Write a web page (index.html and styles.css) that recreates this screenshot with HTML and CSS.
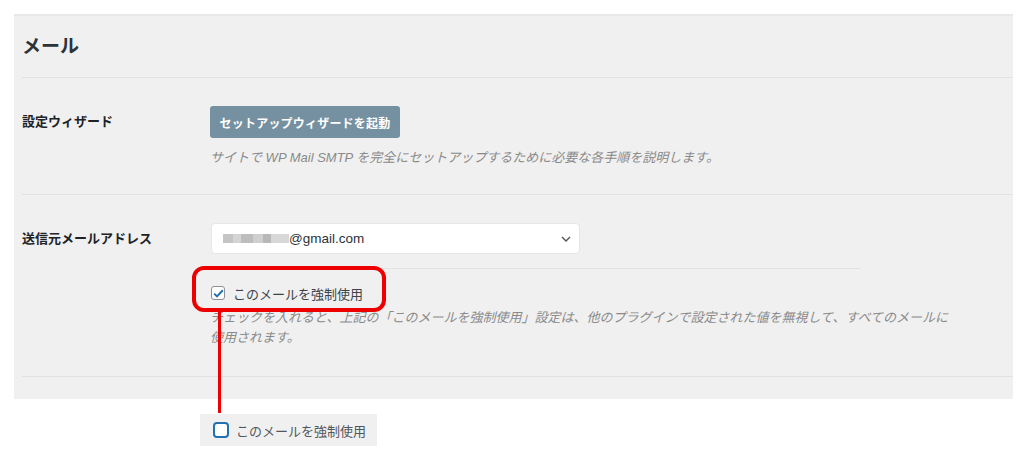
FILE: index.html
```html
<!DOCTYPE html>
<html lang="ja">
<head>
<meta charset="utf-8">
<title>メール設定</title>
<link rel="stylesheet" href="styles.css">
</head>
<body>
<div class="panel">
  <h2 class="heading">メール</h2>
  <div class="row row-wizard">
    <div class="label">設定ウィザード</div>
    <div class="field">
      <button class="btn">セットアップウィザードを起動</button>
      <p class="desc">サイトで WP Mail SMTP を完全にセットアップするために必要な各手順を説明します。</p>
    </div>
  </div>
  <div class="row row-from">
    <div class="label label-select">送信元メールアドレス</div>
    <div class="field">
      <div class="select">
        <span class="blur"></span><span class="email">@gmail.com</span>
        <svg class="chev" width="10" height="6" viewBox="0 0 10 6"><path d="M1 1 L5 5 L9 1" fill="none" stroke="#555" stroke-width="1.4"/></svg>
      </div>
      <div class="subdivider"></div>
      <label class="check-row">
        <span class="cb cb-checked"><svg width="11" height="9" viewBox="0 0 11 9"><path d="M1.2 4.6 L4 7.4 L9.8 1.2" fill="none" stroke="#2271b1" stroke-width="2"/></svg></span>
        <span class="cb-label">このメールを強制使用</span>
        <span class="red-box"></span>
        <span class="red-line"></span>
      </label>
      <p class="desc desc-wide">チェックを入れると、上記の「このメールを強制使用」設定は、他のプラグインで設定された値を無視して、すべてのメールに使用されます。</p>
    </div>
  </div>
</div>
<div class="zoom-box">
  <span class="cb cb-empty"></span>
  <span class="cb-label">このメールを強制使用</span>
</div>
</body>
</html>
```
FILE: styles.css
```css
* { box-sizing: border-box; }
html, body { margin: 0; padding: 0; background: #fff; }
body {
  width: 1024px;
  height: 460px;
  overflow: hidden;
  font-family: "Liberation Sans", "Noto Sans CJK JP", sans-serif;
  color: #1d2327;
}
.panel {
  margin: 14px 0 0 14px;
  width: 999px;
  height: 385px;
  background: #f0f0f0;
  border-top: 2px solid #e8e8e8;
  padding-left: 8px;
}
.heading {
  margin: 0;
  height: 62px;
  line-height: 62px;
  font-size: 19px;
  font-weight: bold;
  color: #2c3338;
  border-bottom: 1px solid #e2e2e2;
}
.row {
  display: grid;
  grid-template-columns: 188px 1fr;
  border-bottom: 1px solid #e2e2e2;
}
.row-wizard { padding: 28px 0 26px; }
.row-from { padding: 28px 0 28px; }
.label {
  font-size: 13px;
  font-weight: bold;
  line-height: 32px;
  color: #1d2327;
}
.label-select { line-height: 31px; }
.field { position: relative; }
.btn {
  display: block;
  height: 32px;
  width: 190px;
  padding: 0;
  border: none;
  border-radius: 3px;
  background: #7591a1;
  color: #fff;
  font-family: inherit;
  font-size: 12px;
  font-weight: bold;
  letter-spacing: 0.2px;
}
.desc {
  margin: 10px 0 0;
  font-size: 13px;
  line-height: 20px;
  font-style: italic;
  color: #8a8a8a;
}
.desc-wide { margin-top: 5px; width: 745px; }
.select {
  position: relative;
  display: flex;
  align-items: center;
  width: 369px;
  height: 31px;
  margin-left: 1px;
  padding-left: 11px;
  background: #fff;
  border: 1px solid #e6e6e6;
  border-radius: 4px;
}
.blur {
  display: inline-block;
  width: 66px;
  height: 9px;
  background: linear-gradient(90deg, #c4c4c4 0 10px, #d4d4d4 10px 18px, #bdbdbd 18px 30px, #cfcfcf 30px 40px, #b8b8b8 40px 48px, #d8d8d8 48px 66px);
}
.email {
  font-size: 13.5px;
  color: #2c3338;
}
.chev { position: absolute; right: 8px; top: 12px; }
.subdivider {
  width: 650px;
  height: 1px;
  margin-top: 14px;
  background: #e2e2e2;
}
.check-row {
  position: relative;
  display: flex;
  align-items: center;
  height: 20px;
  margin-top: 14px;
  padding-left: 1px;
}
.cb {
  display: inline-flex;
  align-items: center;
  justify-content: center;
  flex: none;
}
.cb-checked {
  width: 14px;
  height: 14px;
  background: #fff;
  border: 1px solid #8c8f94;
  border-radius: 3px;
}
.cb-label {
  margin-left: 8px;
  font-size: 13px;
  color: #3c434a;
}
.red-box {
  position: absolute;
  left: -18px;
  top: -17px;
  width: 194px;
  height: 46px;
  border: 4px solid #ee0000;
  border-radius: 12px;
}
.red-line {
  position: absolute;
  left: 8px;
  top: 29px;
  width: 3px;
  height: 101px;
  background: #ee0000;
}
.zoom-box {
  display: flex;
  align-items: center;
  margin: 15px 0 0 200px;
  width: 177px;
  height: 32px;
  padding-left: 13px;
  background: #f0f0f0;
}
.cb-empty {
  width: 16px;
  height: 16px;
  border: 2px solid #2271b1;
  border-radius: 4px;
  background: #fff;
}
.zoom-box .cb-label { margin-left: 7px; color: #50575e; }
```
